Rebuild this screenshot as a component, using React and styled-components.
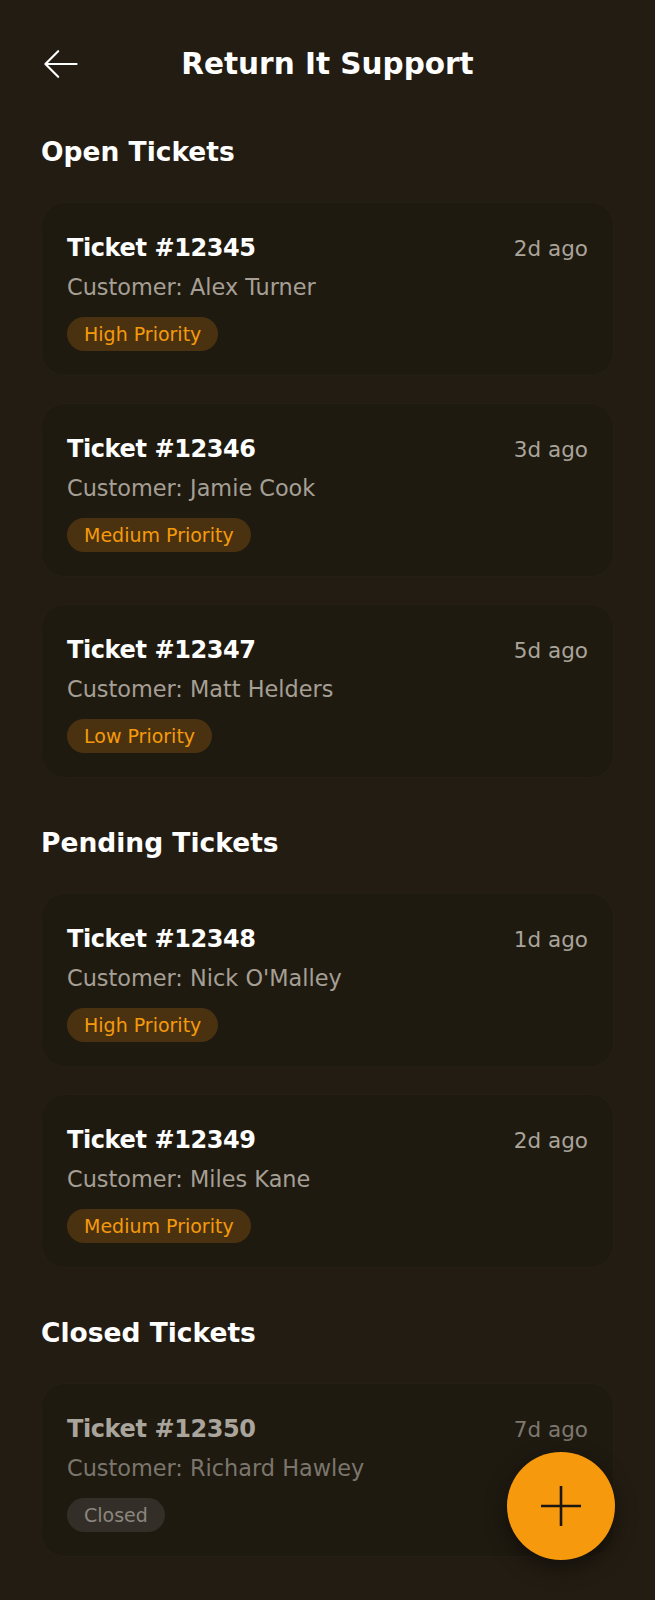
import React from "react";
import styled, { createGlobalStyle } from "styled-components";

const GlobalStyles = createGlobalStyle`
    * {
        box-sizing: border-box;
    }
    body {
        margin: 0;
        background: #231c12;
        font-family: "DejaVu Sans", "Noto Sans", sans-serif;
        color: #ffffff;
    }
`;

const sections = [
    {
        title: "Open Tickets",
        tickets: [
            { id: 12345, customer: "Alex Turner", age: "2d ago", priority: "High Priority" },
            { id: 12346, customer: "Jamie Cook", age: "3d ago", priority: "Medium Priority" },
            { id: 12347, customer: "Matt Helders", age: "5d ago", priority: "Low Priority" },
        ],
    },
    {
        title: "Pending Tickets",
        tickets: [
            { id: 12348, customer: "Nick O'Malley", age: "1d ago", priority: "High Priority" },
            { id: 12349, customer: "Miles Kane", age: "2d ago", priority: "Medium Priority" },
        ],
    },
    {
        title: "Closed Tickets",
        tickets: [
            { id: 12350, customer: "Richard Hawley", age: "7d ago", priority: "Closed", closed: true },
        ],
    },
];

const Page = styled.main`
    min-height: 100vh;
    padding: 36px 41px 34px;
`;

const Header = styled.header`
    display: grid;
    grid-template-columns: 40px 1fr 40px;
    align-items: center;
    height: 56px;
    margin-bottom: 44px;
`;

const BackButton = styled.button`
    width: 40px;
    height: 40px;
    padding: 0;
    border: none;
    background: none;
    color: #ffffff;
    display: flex;
    align-items: center;
    justify-content: center;
    cursor: pointer;
`;

const Title = styled.h1`
    margin: 0;
    text-align: center;
    font-size: 29.5px;
    line-height: 36px;
    font-weight: 700;
    color: #ffffff;
`;

const Section = styled.section`
    & + & {
        margin-top: 49px;
    }
`;

const SectionTitle = styled.h2`
    margin: 0 0 34px;
    font-size: 26.5px;
    line-height: 32px;
    font-weight: 700;
    color: #ffffff;
`;

const CardList = styled.div`
    display: flex;
    flex-direction: column;
    gap: 27px;
`;

const Card = styled.article`
    height: 174px;
    padding: 30px 25px 25px 25px;
    background: #1f1a10;
    border: 1px solid rgba(255, 255, 255, 0.025);
    border-radius: 24px;
`;

const TopRow = styled.div`
    display: flex;
    justify-content: space-between;
    align-items: baseline;
`;

const TicketName = styled.h3`
    margin: 0;
    font-size: 24px;
    line-height: 30px;
    letter-spacing: -0.4px;
    font-weight: 700;
    color: ${(p) => (p.$closed ? "#a9a49c" : "#ffffff")};
`;

const Age = styled.span`
    font-size: 21.5px;
    color: ${(p) => (p.$closed ? "#7d786f" : "#aaa49b")};
`;

const Customer = styled.p`
    margin: 9px 0 0;
    font-size: 22.4px;
    line-height: 30px;
    color: ${(p) => (p.$closed ? "#7b766d" : "#a59f95")};
`;

const Badge = styled.span`
    display: inline-block;
    margin-top: 15px;
    height: 34px;
    padding: 0 17px;
    border-radius: 17px;
    font-size: 19px;
    line-height: 34px;
    background: ${(p) => (p.$closed ? "#332e27" : "#4a3210")};
    color: ${(p) => (p.$closed ? "#8b867e" : "#f59a0b")};
`;

const Fab = styled.button`
    position: fixed;
    right: 40px;
    bottom: 40px;
    width: 108px;
    height: 108px;
    border: none;
    border-radius: 50%;
    background: #f7990c;
    box-shadow: 0 8px 22px rgba(0, 0, 0, 0.45);
    display: flex;
    align-items: center;
    justify-content: center;
    cursor: pointer;
`;

const ArrowIcon = () => (
    <svg width="34" height="28" viewBox="32 52 192 152" fill="none">
        <path
            d="M216 128H40M112 56l-72 72 72 72"
            stroke="currentColor"
            strokeWidth="12"
            strokeLinecap="round"
            strokeLinejoin="round"
        />
    </svg>
);

const PlusIcon = () => (
    <svg width="42" height="42" viewBox="0 0 42 42" fill="none">
        <path d="M1 21h40M21 1v40" stroke="#1c1712" strokeWidth="2.6" />
    </svg>
);

const TicketCard = ({ ticket }) => (
    <Card>
        <TopRow>
            <TicketName $closed={ticket.closed}>Ticket #{ticket.id}</TicketName>
            <Age $closed={ticket.closed}>{ticket.age}</Age>
        </TopRow>
        <Customer $closed={ticket.closed}>Customer: {ticket.customer}</Customer>
        <Badge $closed={ticket.closed}>{ticket.priority}</Badge>
    </Card>
);

const App = () => {
    return (
        <>
            <GlobalStyles />
            <Page>
                <Header>
                    <BackButton aria-label="Back">
                        <ArrowIcon />
                    </BackButton>
                    <Title>Return It Support</Title>
                    <span />
                </Header>
                {sections.map((section) => (
                    <Section key={section.title}>
                        <SectionTitle>{section.title}</SectionTitle>
                        <CardList>
                            {section.tickets.map((ticket) => (
                                <TicketCard key={ticket.id} ticket={ticket} />
                            ))}
                        </CardList>
                    </Section>
                ))}
            </Page>
            <Fab aria-label="New ticket">
                <PlusIcon />
            </Fab>
        </>
    );
};

export default App;
